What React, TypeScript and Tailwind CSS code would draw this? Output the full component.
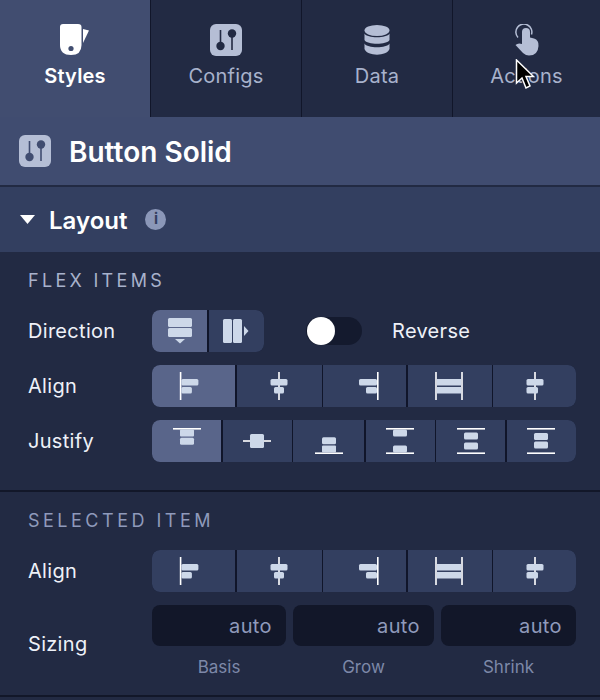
import React from 'react';

const ICON = '#cdd8e9';

function AlignIcon({ kind }: { kind: string }) {
  return (
    <svg width="30" height="30" viewBox="0 0 30 30" fill={ICON}>
      {kind === 'start' && (
        <>
          <rect x="0.8" y="1" width="1.6" height="28" fill="#fff" />
          <rect x="2.4" y="8" width="17" height="6.5" rx="1.5" />
          <rect x="2.4" y="16" width="10.5" height="6.5" rx="1.5" />
        </>
      )}
      {kind === 'center' && (
        <>
          <rect x="14.2" y="1" width="1.6" height="28" fill="#fff" />
          <rect x="6.5" y="8" width="17" height="6.5" rx="1.5" />
          <rect x="10" y="16" width="10" height="6.5" rx="1.5" />
        </>
      )}
      {kind === 'end' && (
        <>
          <rect x="27" y="1" width="1.6" height="28" fill="#fff" />
          <rect x="9" y="8" width="18" height="6.5" rx="1.5" />
          <rect x="16" y="16" width="11" height="6.5" rx="1.5" />
        </>
      )}
      {kind === 'stretch' && (
        <>
          <rect x="0.2" y="1" width="1.6" height="28" fill="#fff" />
          <rect x="26.2" y="1" width="1.6" height="28" fill="#fff" />
          <rect x="1.8" y="8" width="24.4" height="6.5" />
          <rect x="1.8" y="16" width="24.4" height="6.5" />
        </>
      )}
      {kind === 'baseline' && (
        <>
          <rect x="14.2" y="1" width="1.6" height="28" fill="#fff" />
          <rect x="6.5" y="8" width="17" height="6.5" rx="1.5" />
          <rect x="6.5" y="16" width="11.5" height="6.5" rx="1.5" />
        </>
      )}
    </svg>
  );
}

function JustifyIcon({ kind }: { kind: string }) {
  return (
    <svg width="30" height="30" viewBox="0 0 30 30" fill={ICON}>
      {kind === 'start' && (
        <>
          <rect x="1" y="2" width="28" height="1.6" fill="#fff" />
          <rect x="8" y="3.6" width="14" height="7" rx="1" />
          <rect x="8" y="11.8" width="14" height="7" rx="1.5" />
        </>
      )}
      {kind === 'center' && (
        <>
          <rect x="1" y="14.2" width="28" height="1.6" fill="#fff" />
          <rect x="8" y="8" width="14" height="14" rx="1.5" />
        </>
      )}
      {kind === 'end' && (
        <>
          <rect x="1" y="26.4" width="28" height="1.6" fill="#fff" />
          <rect x="8" y="11.2" width="14" height="7" rx="1.5" />
          <rect x="8" y="19.4" width="14" height="7" rx="1" />
        </>
      )}
      {kind === 'between' && (
        <>
          <rect x="1" y="2" width="28" height="1.6" fill="#fff" />
          <rect x="1" y="26.4" width="28" height="1.6" fill="#fff" />
          <rect x="8" y="3.6" width="14" height="7" rx="1.5" />
          <rect x="8" y="19.4" width="14" height="7" rx="1.5" />
        </>
      )}
      {kind === 'around' && (
        <>
          <rect x="1" y="2" width="28" height="1.6" fill="#fff" />
          <rect x="1" y="26.4" width="28" height="1.6" fill="#fff" />
          <rect x="8" y="6.4" width="14" height="7" rx="1.5" />
          <rect x="8" y="16.4" width="14" height="7" rx="1.5" />
        </>
      )}
      {kind === 'evenly' && (
        <>
          <rect x="1" y="2" width="28" height="1.6" fill="#fff" />
          <rect x="1" y="26.4" width="28" height="1.6" fill="#fff" />
          <rect x="8" y="7" width="14" height="7" rx="1.5" />
          <rect x="8" y="15.4" width="14" height="7" rx="1.5" />
        </>
      )}
    </svg>
  );
}

function ConfigIcon({ size, fg }: { size: number; fg: string }) {
  return (
    <svg width={size} height={size} viewBox="0 0 32 32">
      <rect width="32" height="32" rx="6" fill="#b5bed5" />
      <rect x="9.7" y="6" width="1.6" height="16" fill={fg} />
      <circle cx="10.5" cy="22" r="4.2" fill={fg} />
      <rect x="21.2" y="10" width="1.6" height="16" fill={fg} />
      <circle cx="22" cy="9.5" r="4.2" fill={fg} />
    </svg>
  );
}

function StylesIcon() {
  return (
    <svg width="30" height="32" viewBox="0 0 30 32">
      <path d="M23 5 L29 6.5 L23 19 Z" fill="#fff" />
      <path
        d="M3 0 H18 Q21.5 0 21.5 3 V21 Q21.5 31 11 31 Q0 31 0 21 V3 Q0 0 3 0 Z"
        fill="#fff"
      />
      <circle cx="11" cy="24.5" r="2.6" fill="#414d70" />
    </svg>
  );
}

function DataIcon() {
  return (
    <svg width="26" height="30" viewBox="0 0 26 30" fill="#b5bed5">
      <ellipse cx="13" cy="5.5" rx="12.5" ry="5.5" />
      <path d="M0.5 8.5 C3 13.5 23 13.5 25.5 8.5 V15 C23 20 3 20 0.5 15 Z" />
      <path d="M0.5 18.5 C3 23.5 23 23.5 25.5 18.5 V24 C23 31.5 3 31.5 0.5 24 Z" />
    </svg>
  );
}

function ActionsIcon() {
  return (
    <svg width="24" height="32" viewBox="0 0 24 32" fill="#b5bed5">
      <path
        d="M3 13.5 A8 8 0 1 1 16.5 10.5"
        fill="none"
        stroke="#b5bed5"
        strokeWidth="1.5"
      />
      <path d="M7 8 A4 4 0 0 1 15 8 V13.5 L19 14.5 Q24 16 23.5 22 Q23 31.5 14 31.5 Q11 31.5 8 29 L0.5 21 Q3 18.5 7 20 Z" />
    </svg>
  );
}

function Tab({
  label,
  icon,
  width,
  active,
  divider,
}: {
  label: string;
  icon: React.ReactNode;
  width: string;
  active?: boolean;
  divider?: boolean;
}) {
  return (
    <div
      className={`flex flex-col items-center pt-6 ${width} ${
        divider ? 'border-r border-[#11162a]' : ''
      } ${active ? 'bg-[#414d70] font-semibold text-white' : 'text-[#a8b2cc]'}`}
    >
      <div className="flex h-[32px] items-center justify-center">{icon}</div>
      <div className="mt-[7px] text-[20px] leading-[26px] tracking-[0.2px]">
        {label}
      </div>
    </div>
  );
}

function Segments({
  cols,
  children,
  active,
}: {
  cols: string;
  children: React.ReactNode[];
  active?: number;
}) {
  return (
    <div className={`grid h-[42px] gap-x-[1.5px] overflow-hidden rounded-lg bg-[#10152a] ${cols}`}>
      {children.map((c, i) => (
        <div
          key={i}
          className={`flex items-center justify-center ${
            i === active ? 'bg-[#59658a]' : 'bg-[#333f60]'
          }`}
        >
          {c}
        </div>
      ))}
    </div>
  );
}

const alignCols = 'grid-cols-[83px_85px_83px_84px_1fr]';
const justifyCols = 'grid-cols-[69px_69px_71px_69px_69px_1fr]';

function AlignRow({ active }: { active?: number }) {
  return (
    <Segments cols={alignCols} active={active}>
      {['start', 'center', 'end', 'stretch', 'baseline'].map((k) => (
        <AlignIcon key={k} kind={k} />
      ))}
    </Segments>
  );
}

function Row({
  label,
  className,
  children,
}: {
  label: string;
  className?: string;
  children: React.ReactNode;
}) {
  return (
    <div className={`flex items-center ${className ?? ''}`}>
      <div className="w-[124px] shrink-0 text-[20px] tracking-[0.3px] text-[#eef1f8]">{label}</div>
      {children}
    </div>
  );
}

function SizeInput({ width, label }: { width: string; label: string }) {
  return (
    <div className={width}>
      <div className="flex h-[41px] items-center justify-end rounded-lg bg-[#121729] pr-[14px] text-[20px] tracking-[0.4px] text-[#8f9abb]">
        auto
      </div>
      <div className="mt-[9px] text-center text-[17px] leading-[24px] text-[#7d88a8]">
        {label}
      </div>
    </div>
  );
}

export default function App() {
  return (
    <div
      className="relative h-[700px] w-[600px] overflow-hidden bg-[#222a43]"
      style={{ fontFamily: 'Inter, sans-serif' }}
    >
      <div className="flex h-[117px] bg-[#222a43]">
        <Tab label="Styles" width="w-[151px]" active divider icon={<StylesIcon />} />
        <Tab
          label="Configs"
          width="w-[151px]"
          divider
          icon={<ConfigIcon size={32} fg="#222a43" />}
        />
        <Tab label="Data" width="w-[151px]" divider icon={<DataIcon />} />
        <Tab label="Actions" width="w-[147px]" icon={<ActionsIcon />} />
      </div>

      <div className="flex h-[70px] items-center gap-[18px] border-b-2 border-[#222a43] bg-[#404c70] pl-[19px]">
        <ConfigIcon size={32} fg="#404c70" />
        <div className="pt-[2px] text-[28px] font-semibold text-white">Button Solid</div>
      </div>

      <div className="flex h-[65px] items-center bg-[#333f60] pl-5">
        <svg width="15" height="9" viewBox="0 0 15 9" fill="#fff">
          <path d="M0 0 H15 L7.5 9 Z" />
        </svg>
        <div className="ml-[14px] pt-[3px] text-[24px] font-semibold text-white">Layout</div>
        <div className="ml-[18px] flex h-[21px] w-[21px] items-center justify-center rounded-full bg-[#8b97b8] text-[15px] font-bold text-[#333f60]">
          i
        </div>
      </div>

      <div className="h-[240px] border-b-2 border-[#121729] pl-[28px] pt-4">
        <div className="text-[18px] leading-[26px] tracking-[3.3px] text-[#a8b2cc]">
          FLEX ITEMS
        </div>
        <Row label="Direction" className="mt-4">
          <div className="w-[112px]">
            <Segments cols="grid-cols-[55px_auto]" active={0}>
              {[
                <svg key="col" width="26" height="28" viewBox="0 0 26 28" fill={ICON}>
                  <rect x="1" y="1" width="24" height="9" rx="1.5" />
                  <rect x="1" y="11" width="24" height="9" rx="1.5" />
                  <path d="M8 22 H18 L13 26.5 Z" />
                </svg>,
                <svg key="row" width="28" height="26" viewBox="0 0 28 26" fill={ICON}>
                  <rect x="1" y="1" width="9" height="24" rx="1.5" />
                  <rect x="11" y="1" width="9" height="24" rx="1.5" />
                  <path d="M22 8 V18 L26.5 13 Z" />
                </svg>,
              ]}
            </Segments>
          </div>
          <div className="relative ml-[42px] h-[28px] w-[56px] rounded-full bg-[#141a2e]">
            <div className="absolute left-[1px] top-0 h-[28px] w-[28px] rounded-full bg-white" />
          </div>
          <div className="ml-[30px] text-[20px] tracking-[0.3px] text-[#eef1f8]">Reverse</div>
        </Row>
        <Row label="Align" className="mt-[13px]">
          <div className="w-[424px]">
            <AlignRow active={0} />
          </div>
        </Row>
        <Row label="Justify" className="mt-[13px]">
          <div className="w-[424px]">
            <Segments cols={justifyCols} active={0}>
              {['start', 'center', 'end', 'between', 'around', 'evenly'].map((k) => (
                <JustifyIcon key={k} kind={k} />
              ))}
            </Segments>
          </div>
        </Row>
      </div>

      <div className="h-[205px] border-b-2 border-[#121729] pl-[28px] pt-4">
        <div className="text-[18px] leading-[26px] tracking-[3.5px] text-[#8f9abb]">
          SELECTED ITEM
        </div>
        <Row label="Align" className="mt-[16px]">
          <div className="w-[424px]">
            <AlignRow />
          </div>
        </Row>
        <div className="mt-[13px] flex">
          <div className="w-[124px] shrink-0 pt-[24px] text-[20px] tracking-[0.3px] text-[#eef1f8]">Sizing</div>
          <div className="flex gap-[7px]">
            <SizeInput width="w-[134px]" label="Basis" />
            <SizeInput width="w-[141px]" label="Grow" />
            <SizeInput width="w-[135px]" label="Shrink" />
          </div>
        </div>
      </div>

      {/* mouse pointer */}
      <svg
        className="absolute left-[515px] top-[59px]"
        width="20"
        height="32"
        viewBox="0 0 20 32"
      >
        <path
          d="M1.5 1 V24 L7 19 L11 29 L15 27 L11 17.5 L18.5 17.5 Z"
          fill="#000"
          stroke="#fff"
          strokeWidth="1.5"
        />
      </svg>
    </div>
  );
}
